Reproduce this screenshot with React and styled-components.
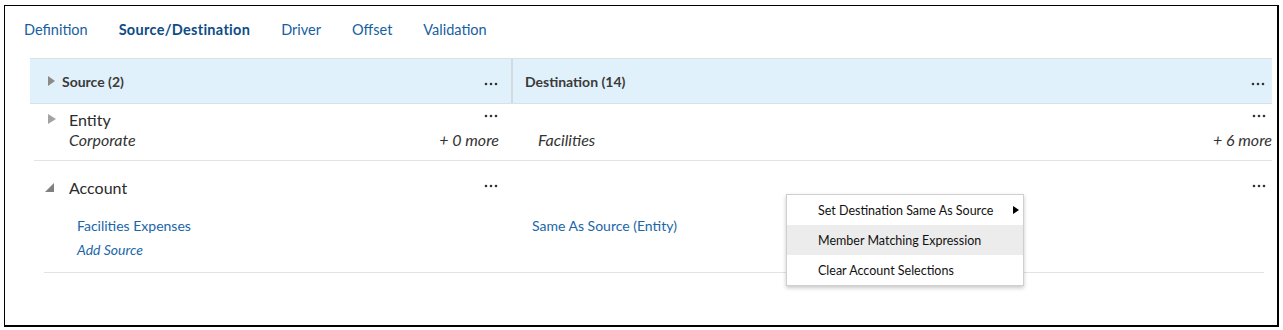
import React from 'react';
import styled, { createGlobalStyle } from 'styled-components';

const GlobalStyle = createGlobalStyle`
  body {
    margin: 0;
    background: #fff;
    font-family: Lato, "Liberation Sans", sans-serif;
    color: #333;
  }
`;

const Frame = styled.div`
  box-sizing: border-box;
  margin: 5px 0 0 4px;
  width: 1275px;
  height: 322px;
  border: 1px solid #000;
  border-right-width: 2px;
  border-bottom-width: 2px;
`;

const Tabs = styled.nav`
  display: flex;
  align-items: center;
  gap: 31px;
  height: 46px;
  padding-left: 19px;
  margin-bottom: 6px;
`;

const Tab = styled.span`
  font-size: 14.5px;
  color: ${p => (p.active ? '#0c4d85' : '#15609f')};
  font-weight: ${p => (p.active ? 700 : 400)};
  letter-spacing: ${p => (p.active ? '0.3px' : '0')};
`;

const Panel = styled.div`
  margin: 0 5px 0 25px;
`;

const HeaderRow = styled.div`
  display: grid;
  grid-template-columns: 481px 1fr;
  height: 46px;
  background: #e1f1fc;
  border-top: 1px solid #d9e1e7;
  border-bottom: 1px solid #d9e1e7;
  box-sizing: border-box;
`;

const HeaderCell = styled.div`
  display: flex;
  align-items: center;
  padding: ${p => p.pad};
  border-left: ${p => (p.divider ? '2px solid #d3dbe1' : 'none')};
  font-size: 14px;
  font-weight: 700;
  color: #3a3a3a;
`;

const Grow = styled.span`
  flex: 1;
`;

const Row = styled.div`
  display: grid;
  grid-template-columns: ${p => p.left}px 1fr;
  margin: ${p => p.margin};
  border-bottom: 1px solid #e3e3e3;
`;

const Cell = styled.div`
  position: relative;
  padding: ${p => p.pad};
`;

const Line = styled.div`
  display: flex;
  align-items: center;
  height: ${p => p.h || 20}px;
`;

const Name = styled.span`
  font-size: 16px;
  color: #2b2b2b;
`;

const Italic = styled.span`
  font-size: 16px;
  font-style: italic;
  color: #333;
`;

const SubList = styled.div`
  margin-top: 16px;
  padding-left: ${p => p.indent}px;
`;

const Link = styled.span`
  font-size: 14px;
  color: #1a66a8;
  font-style: ${p => (p.italic ? 'italic' : 'normal')};
`;

const Menu = styled.ul`
  position: absolute;
  left: 275px;
  top: 33px;
  width: 238px;
  margin: 0;
  padding: 0;
  list-style: none;
  background: #fff;
  border: 1px solid #cfcfcf;
  box-shadow: 0 2px 4px rgba(0, 0, 0, 0.22);
  box-sizing: border-box;
`;

const MenuItem = styled.li`
  display: flex;
  align-items: center;
  height: 30px;
  padding-left: 31px;
  font-size: 12.5px;
  color: #111;
  background: ${p => (p.hover ? '#ececec' : '#fff')};
`;

const SubArrow = styled.span`
  margin-left: auto;
  margin-right: 4px;
  width: 0;
  height: 0;
  border-top: 4.5px solid transparent;
  border-bottom: 4.5px solid transparent;
  border-left: 6px solid #000;
`;

const Caret = styled.span`
  flex: none;
  width: 0;
  height: 0;
  margin-right: ${p => p.gap}px;
  border-top: ${p => p.h / 2}px solid transparent;
  border-bottom: ${p => p.h / 2}px solid transparent;
  border-left: ${p => p.w}px solid ${p => p.color};
`;

const Expanded = styled.span`
  flex: none;
  width: 0;
  height: 0;
  margin-right: ${p => p.gap}px;
  border-left: 9px solid transparent;
  border-bottom: 9px solid #808080;
`;

const DotsIcon = styled.svg`
  flex: none;
  margin: ${p => p.m || '0'};
`;

const Dots = ({ m }) => (
  <DotsIcon m={m} width="14" height="4" viewBox="0 0 14 4">
    <circle cx="2" cy="2" r="1.3" fill="#333" />
    <circle cx="7" cy="2" r="1.3" fill="#333" />
    <circle cx="12" cy="2" r="1.3" fill="#333" />
  </DotsIcon>
);

export default function App() {
  return (
    <>
      <GlobalStyle />
      <Frame>
        <Tabs>
          <Tab>Definition</Tab>
          <Tab active>Source/Destination</Tab>
          <Tab>Driver</Tab>
          <Tab>Offset</Tab>
          <Tab>Validation</Tab>
        </Tabs>
        <Panel>
          <HeaderRow>
            <HeaderCell pad="0 13px 0 18px">
              <Caret w={7} h={11} color="#8a8a8a" gap={7} />
              <Grow>Source (2)</Grow>
              <Dots m="6px 0 0 0" />
            </HeaderCell>
            <HeaderCell divider pad="0 7px 0 12px">
              <Grow>Destination (14)</Grow>
              <Dots m="6px 0 0 0" />
            </HeaderCell>
          </HeaderRow>

          <Row left={477} margin="0 0 0 4px">
            <Cell pad="5px 12px 11px 14px">
              <Line>
                <Caret w={8} h={11} color="#a3a3a3" gap={13} />
                <Grow><Name>Entity</Name></Grow>
                <Dots m="-6px 1px 0 0" />
              </Line>
              <Line>
                <Grow style={{ paddingLeft: 21 }}><Italic>Corporate</Italic></Grow>
                <Italic>+ 0 more</Italic>
              </Line>
            </Cell>
            <Cell pad="5px 0 11px 27px">
              <Line>
                <Grow />
                <Dots m="-6px 6px 0 0" />
              </Line>
              <Line>
                <Grow><Italic>Facilities</Italic></Grow>
                <Italic>+ 6 more</Italic>
              </Line>
            </Cell>
          </Row>

          <Row left={467} margin="0 8px 0 14px">
            <Cell pad="16px 13px 11px 1px">
              <Line>
                <Expanded gap={15} />
                <Grow><Name>Account</Name></Grow>
                <Dots m="-3px 0 0 0" />
              </Line>
              <SubList indent={32}>
                <Line h={24}><Link>Facilities Expenses</Link></Line>
                <Line h={24}><Link italic>Add Source</Link></Line>
              </SubList>
            </Cell>
            <Cell pad="16px 0 11px 21px">
              <Line>
                <Grow />
                <Dots m="-3px -2px 0 0" />
              </Line>
              <SubList indent={0}>
                <Line h={24}><Link>Same As Source (Entity)</Link></Line>
              </SubList>
              <Menu>
                <MenuItem>
                  Set Destination Same As Source
                  <SubArrow />
                </MenuItem>
                <MenuItem hover>Member Matching Expression</MenuItem>
                <MenuItem>Clear Account Selections</MenuItem>
              </Menu>
            </Cell>
          </Row>
        </Panel>
      </Frame>
    </>
  );
}
